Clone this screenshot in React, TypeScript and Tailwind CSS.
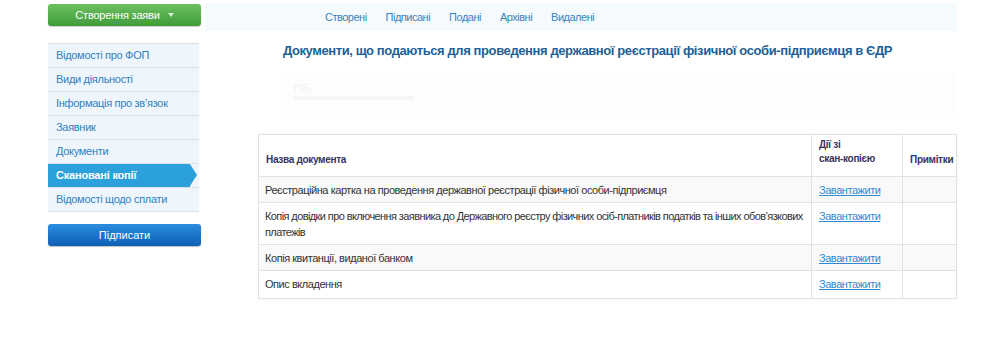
const menu = [
  'Відомості про ФОП',
  'Види діяльності',
  'Інформація про зв\u2019язок',
  'Заявник',
  'Документи',
  'Скановані копії',
  'Відомості щодо сплати',
];

const tabs = ['Створені', 'Підписані', 'Подані', 'Архівні', 'Видалені'];

const docs = [
  'Реєстраційна картка на проведення державної реєстрації фізичної особи-підприємця',
  'Копія довідки про включення заявника до Державного реєстру фізичних осіб-платників податків та інших обов\u2019язкових платежів',
  'Копія квитанції, виданої банком',
  'Опис вкладення',
];

export default function App() {
  return (
    <div className="w-[1000px] h-[342px] bg-white font-['Liberation_Sans',Arial,sans-serif] text-[#333]">
      <div className="flex pt-[3px]">
        <div className="w-[153px] ml-[48px] pt-[1px]">
          <button className="w-full h-[22px] rounded-[3px] bg-gradient-to-b from-[#6cc060] to-[#3f9c3a] text-white text-[11px] tracking-[-0.2px] flex items-center justify-center gap-[8px] shadow-[0_1px_1px_rgba(0,0,0,0.2)]">
            Створення заяви
            <span className="w-0 h-0 border-x-[3.5px] border-x-transparent border-t-[4px] border-t-[#d8efd4]" />
          </button>
        </div>
        <div className="ml-[4px] w-[752px] h-[28px] bg-[#f5fafd] flex items-center pl-[120px] gap-[19px] text-[11px] tracking-[-0.5px] text-[#3a83bd]">
          {tabs.map(t => (
            <span key={t}>{t}</span>
          ))}
        </div>
      </div>

      <div className="flex mt-[12px]">
        {/* side menu */}
        <div className="w-[153px] ml-[48px] shrink-0">
          <div className="w-[151px] bg-[#eef6fb] border-t border-dotted border-[#c5cfd6]">
            {menu.map((m, i) =>
              i === 5 ? (
                <div key={m} className="relative h-[24px] border-b border-dotted border-[#c5cfd6]">
                  <div className="h-[23px] w-[142px] bg-[#2ba0db] text-white text-[11px] tracking-[-0.2px] font-bold flex items-center pl-[8px]">
                    {m}
                  </div>
                  <div className="absolute left-[142px] top-0 w-0 h-0 border-y-[11.5px] border-y-transparent border-l-[7px] border-l-[#2ba0db]" />
                </div>
              ) : (
                <div
                  key={m}
                  className="h-[24px] border-b border-dotted border-[#c5cfd6] text-[11px] tracking-[-0.3px] text-[#2f80bf] flex items-center pl-[8px]"
                >
                  {m}
                </div>
              )
            )}
          </div>
          <button className="mt-[12px] w-[153px] h-[22px] rounded-[3px] bg-gradient-to-b from-[#2a8de0] to-[#0f5fb4] text-white text-[11px] flex items-center justify-center shadow-[0_1px_1px_rgba(0,0,0,0.25)]">
            Підписати
          </button>
        </div>

        {/* content */}
        <div className="ml-[57px] w-[699px]">
          <h1 className="-mt-[2px] text-center text-[13px] tracking-[-0.4px] font-bold text-[#1d5f98] pr-[40px] whitespace-nowrap">
            Документи, що подаються для проведення державної реєстрації фізичної особи-підприємця в ЄДР
          </h1>
          <div className="mt-[12px] ml-[22px] w-[676px] h-[40px] bg-[#fdfdfd] rounded-[3px] pl-[14px] pt-[10px]">
            <div className="text-[10px] leading-[11px] text-[#f2f2f2]">ПІБ</div>
            <div className="mt-[2px] w-[120px] h-[4px] bg-[#f6f6f6]" />
          </div>

          <table className="mt-[21px] w-[699px] table-fixed border-collapse border border-[#e2e2e2] text-[11px] tracking-[-0.45px] shadow-[0_0_2px_rgba(0,0,0,0.06)]">
            <colgroup>
              <col />
              <col className="w-[91px]" />
              <col className="w-[54px]" />
            </colgroup>
            <thead>
              <tr className="h-[42px] text-[10px] tracking-[-0.3px] text-[#34345f]">
                <th className="text-left align-bottom pb-[9px] pl-[7px] font-bold">Назва документа</th>
                <th className="text-left align-bottom pb-[10px] pl-[7px] leading-[14px] font-bold border-l border-[#e2e2e2]">
                  Дії зі
                  <br />
                  скан-копією
                </th>
                <th className="text-left align-bottom pb-[9px] pl-[7px] font-bold border-l border-[#e2e2e2]">
                  Примітки
                </th>
              </tr>
            </thead>
            <tbody>
              {docs.map((d, i) => (
                <tr
                  key={d}
                  className={`${i % 2 === 0 ? 'bg-[#f9f9f9]' : 'bg-white'} border-t border-[#e2e2e2] ${
                    i === 1 ? 'h-[42px]' : i === 3 ? 'h-[28px]' : 'h-[26px]'
                  }`}
                >
                  <td
                    className={`align-top pt-[5px] pl-[6px] pr-0 leading-[16px] ${
                      i === 1 ? 'tracking-[-0.6px]' : ''
                    }`}
                  >
                    {d}
                  </td>
                  <td className="align-top pt-[5px] pl-[7px] leading-[16px] border-l border-[#e2e2e2]">
                    <span className="text-[#2f8ad0] underline">Завантажити</span>
                  </td>
                  <td className="border-l border-[#e2e2e2]" />
                </tr>
              ))}
            </tbody>
          </table>
        </div>
      </div>
    </div>
  );
}
